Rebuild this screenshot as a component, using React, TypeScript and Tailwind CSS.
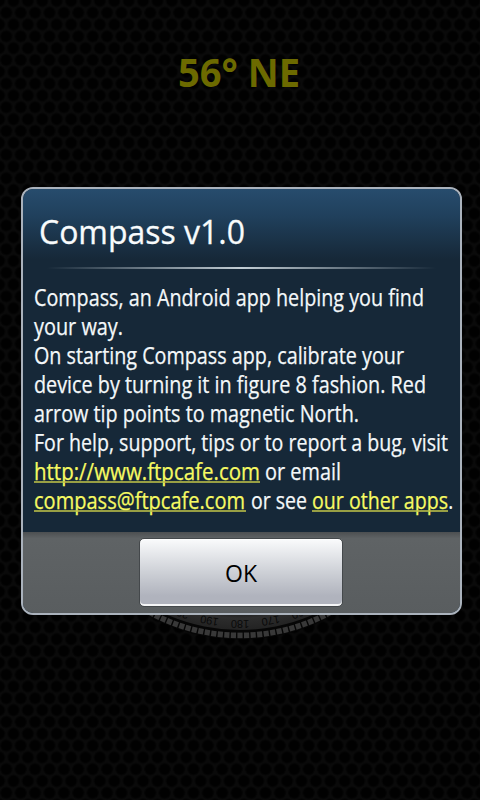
import React from 'react';

const CX = 240;
const CY = 447;

interface LineProps {
  width: number;
  children: React.ReactNode;
}

// One line of the message, fitted to a fixed text width
const Line: React.FC<LineProps> = ({ width, children }) => (
  <svg className="block h-[29px] w-[424px] overflow-visible" fill="#f4f8fa" stroke="#f4f8fa" strokeWidth="0.25">
    <text x="0" y="23" fontSize="23.5" textLength={width} lengthAdjust="spacingAndGlyphs">
      {children}
    </text>
  </svg>
);

interface UnderlineProps {
  from: number;
  to: number;
}

const Underline: React.FC<UnderlineProps> = ({ from, to }) => (
  <rect x={from} y="24.2" width={to - from} height="1.6" fill="#b9bd48" stroke="none" />
);

const Backdrop: React.FC = () => {
  const ticks = Array.from({ length: 41 }, (_, i) => (i - 20) * 2);
  const labels = [150, 160, 170, 180, 190, 200, 210];

  return (
    <svg className="absolute inset-0" width="480" height="800">
      <defs>
        <pattern id="mesh" x="13.5" y="0.9" width="14.4" height="23.64" patternUnits="userSpaceOnUse">
          <rect width="14.4" height="23.64" fill="#0a0a0a" />
          <g fill="#010101" stroke="#050505" strokeWidth="1">
            <circle cx="7.2" cy="11.82" r="5.8" />
            <circle cx="0" cy="0" r="5.8" />
            <circle cx="14.4" cy="0" r="5.8" />
            <circle cx="0" cy="23.64" r="5.8" />
            <circle cx="14.4" cy="23.64" r="5.8" />
          </g>
        </pattern>
        <radialGradient id="dial" gradientUnits="userSpaceOnUse" cx={CX} cy={CY} r="184">
          <stop offset="0.9" stopColor="#1c1c1c" />
          <stop offset="0.93" stopColor="#2d2d2d" />
          <stop offset="1" stopColor="#222222" />
        </radialGradient>
      </defs>
      <rect width="480" height="800" fill="url(#mesh)" />
      <circle cx={CX} cy={CY} r="192.5" fill="#060606" />
      <circle cx={CX} cy={CY} r="183" fill="url(#dial)" />
      {ticks.map(a => (
        <rect
          key={a}
          x={CX - 2.6}
          y={CY + 185.6}
          width="5.2"
          height="5.6"
          fill="#383838"
          transform={`rotate(${a} ${CX} ${CY})`}
        />
      ))}
      {labels.map(n => (
        <text
          key={n}
          x={CX}
          y={CY - 172.5}
          fontSize="11"
          textAnchor="middle"
          fill="#0a0a0a"
          fontFamily="Liberation Sans, sans-serif"
          transform={`rotate(${n} ${CX} ${CY})`}
        >
          {n}
        </text>
      ))}
    </svg>
  );
};

export default function App() {
  return (
    <div className="relative h-[800px] w-[480px] overflow-hidden bg-black font-['Open_Sans','Noto_Sans',sans-serif]">
      <Backdrop />
      <div className="relative flex flex-col">
        <h1 className="h-[187px] pt-[46px] text-center text-[#6c6a00]">
          <svg className="mx-auto block h-[54px] w-[122px] overflow-visible" fill="currentColor">
            <text x="-1" y="41" fontSize="39" fontWeight="700" textLength="122" lengthAdjust="spacingAndGlyphs">
              56° NE
            </text>
          </svg>
        </h1>

        <section className="ml-[21px] flex h-[428px] w-[441px] flex-col overflow-hidden rounded-xl border-2 border-[#aab2bc] bg-[#162838]">
          <header className="flex h-[78px] shrink-0 flex-col bg-linear-to-b from-[#274c6d] via-[#20405c] via-35% to-[#162838] to-90% pl-4">
            <svg className="mt-[18px] block h-[50px] w-[206px] overflow-visible" fill="#f8fbfc" stroke="#f8fbfc" strokeWidth="0.3">
              <text x="0" y="37" fontSize="33" textLength="206" lengthAdjust="spacingAndGlyphs">
                Compass v1.0
              </text>
            </svg>
          </header>
          <div className="mx-6 h-[2px] shrink-0 bg-linear-to-r from-transparent via-[#c3ced5] to-transparent" />

          <div className="h-[263px] shrink-0 pt-[14px] pl-[11px]">
            <Line width={390}>Compass, an Android app helping you find</Line>
            <Line width={89}>your way.</Line>
            <Line width={370}>On starting Compass app, calibrate your</Line>
            <Line width={392}>device by turning it in figure 8 fashion. Red</Line>
            <Line width={325}>arrow tip points to magnetic North.</Line>
            <Line width={414}>For help, support, tips or to report a bug, visit</Line>
            <svg className="block h-[29px] w-[424px] overflow-visible" fill="#f4f8fa" fontSize="23.5">
              <text x="0" y="23" fill="#f6fa62" stroke="#f6fa62" strokeWidth="0.25" textLength="226" lengthAdjust="spacingAndGlyphs">http://www.ftpcafe.com</text>
              <Underline from={0} to={226} />
              <text x="231" y="23" stroke="#f4f8fa" strokeWidth="0.25" textLength="76" lengthAdjust="spacingAndGlyphs">or email</text>
            </svg>
            <svg className="block h-[29px] w-[424px] overflow-visible" fill="#f4f8fa" fontSize="23.5">
              <text x="0" y="23" fill="#f6fa62" stroke="#f6fa62" strokeWidth="0.25" textLength="211" lengthAdjust="spacingAndGlyphs">compass@ftpcafe.com</text>
              <Underline from={0} to={212} />
              <text x="217" y="23" stroke="#f4f8fa" strokeWidth="0.25" textLength="56" lengthAdjust="spacingAndGlyphs">or see</text>
              <text x="278" y="23" fill="#f6fa62" stroke="#f6fa62" strokeWidth="0.25" textLength="136" lengthAdjust="spacingAndGlyphs">our other apps</text>
              <Underline from={278} to={414} />
              <text x="414" y="23" textLength="5.5" lengthAdjust="spacingAndGlyphs">.</text>
            </svg>
          </div>

          <footer className="flex flex-1 justify-center bg-linear-to-b from-[#4c4f51] via-[#5f6365] via-8% to-[#595d5f] pt-[6px]">
            <button className="mr-[2px] flex h-[69px] w-[204px] items-center justify-center rounded-[5px] border border-[#44484b] bg-linear-to-b from-[#fafbfc] via-[#cdd0d6] via-50% to-[#b0b3bd] to-85% text-black shadow-[inset_0_-2px_0_#f4f5f6,inset_0_1px_0_#ffffff]">
              <svg className="block h-[30px] w-8 overflow-visible" fill="currentColor">
                <text x="0" y="24" fontSize="23.5" textLength="32" lengthAdjust="spacingAndGlyphs">OK</text>
              </svg>
            </button>
          </footer>
        </section>
      </div>
    </div>
  );
}
